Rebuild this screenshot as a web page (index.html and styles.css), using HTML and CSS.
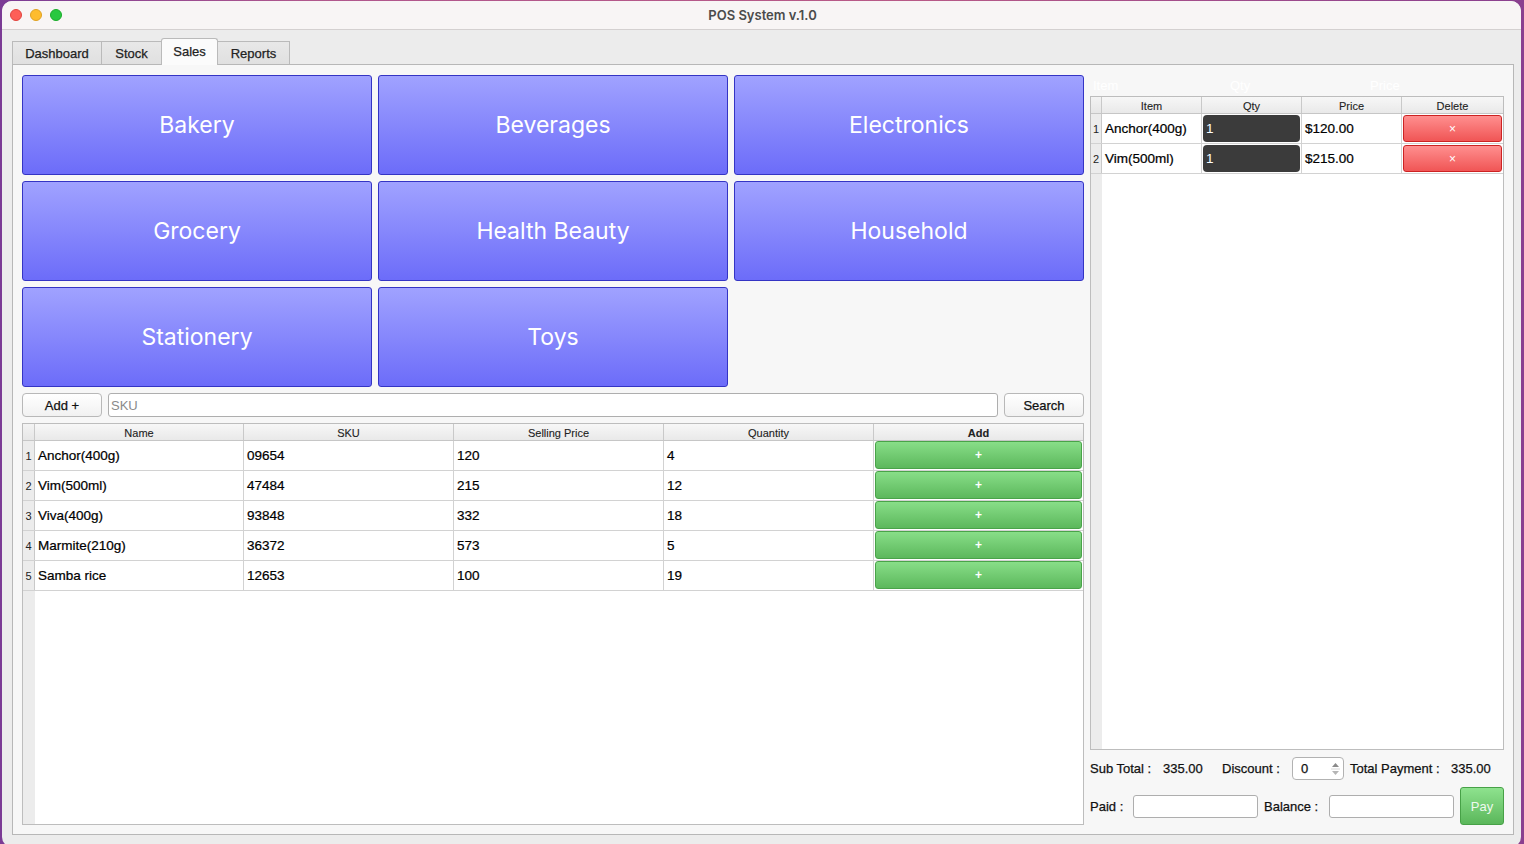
FILE: index.html
```html
<!DOCTYPE html>
<html>
<head>
<meta charset="utf-8">
<title>POS System v.1.0</title>
<link rel="stylesheet" href="styles.css">
</head>
<body>
<div class="window">
  <div class="titlebar">
    <div class="lights">
      <span class="light red"></span>
      <span class="light yellow"></span>
      <span class="light green"></span>
    </div>
    <div class="title">POS System v.1.0</div>
    <div></div>
  </div>
  <div class="main">
    <div class="tabs">
      <div class="tab w-dash">Dashboard</div>
      <div class="tab w-stock">Stock</div>
      <div class="tab active w-sales">Sales</div>
      <div class="tab w-reports">Reports</div>
    </div>
    <div class="pane">
      <div class="left">
        <div class="cats">
          <div class="cat">Bakery</div>
          <div class="cat">Beverages</div>
          <div class="cat">Electronics</div>
          <div class="cat">Grocery</div>
          <div class="cat">Health Beauty</div>
          <div class="cat">Household</div>
          <div class="cat">Stationery</div>
          <div class="cat">Toys</div>
        </div>
        <div class="toolbar">
          <div class="btn w-add">Add +</div>
          <div class="input sku"><span class="placeholder">SKU</span></div>
          <div class="btn w-search">Search</div>
        </div>
        <div class="table">
          <div class="row head prod">
            <div class="vh"></div>
            <div class="hc">Name</div>
            <div class="hc">SKU</div>
            <div class="hc">Selling Price</div>
            <div class="hc">Quantity</div>
            <div class="hc bold">Add</div>
          </div>
          <div class="row prod">
            <div class="vh">1</div><div class="c">Anchor(400g)</div><div class="c">09654</div><div class="c">120</div><div class="c">4</div><div class="c btncell"><div class="addbtn">+</div></div>
          </div>
          <div class="row prod">
            <div class="vh">2</div><div class="c">Vim(500ml)</div><div class="c">47484</div><div class="c">215</div><div class="c">12</div><div class="c btncell"><div class="addbtn">+</div></div>
          </div>
          <div class="row prod">
            <div class="vh">3</div><div class="c">Viva(400g)</div><div class="c">93848</div><div class="c">332</div><div class="c">18</div><div class="c btncell"><div class="addbtn">+</div></div>
          </div>
          <div class="row prod">
            <div class="vh">4</div><div class="c">Marmite(210g)</div><div class="c">36372</div><div class="c">573</div><div class="c">5</div><div class="c btncell"><div class="addbtn">+</div></div>
          </div>
          <div class="row prod">
            <div class="vh">5</div><div class="c">Samba rice</div><div class="c">12653</div><div class="c">100</div><div class="c">19</div><div class="c btncell"><div class="addbtn">+</div></div>
          </div>
          <div class="filler prodfill"></div>
        </div>
      </div>
      <div class="right">
        <div class="ghost">
          <span class="g1">Item</span><span class="g2">Qty</span><span class="g3">Price</span>
        </div>
        <div class="table cart">
          <div class="row head cartrow">
            <div class="vh"></div>
            <div class="hc">Item</div>
            <div class="hc">Qty</div>
            <div class="hc">Price</div>
            <div class="hc">Delete</div>
          </div>
          <div class="row cartrow">
            <div class="vh">1</div><div class="c">Anchor(400g)</div><div class="c btncell"><div class="qty">1</div></div><div class="c">$120.00</div><div class="c btncell"><div class="delbtn">×</div></div>
          </div>
          <div class="row cartrow">
            <div class="vh">2</div><div class="c">Vim(500ml)</div><div class="c btncell"><div class="qty">1</div></div><div class="c">$215.00</div><div class="c btncell"><div class="delbtn">×</div></div>
          </div>
          <div class="filler cartfill"></div>
        </div>
        <div class="totals">
          <span class="l-sub">Sub Total :</span>
          <span class="v-sub">335.00</span>
          <span class="l-disc">Discount :</span>
          <div class="spin"><span>0</span>
            <svg class="arrows" width="9" height="16" viewBox="0 0 9 16"><path d="M1 6 L4.5 2 L8 6 Z" fill="#8a8a8a"/><path d="M1 10 L4.5 14 L8 10 Z" fill="#b5b5b5"/><line x1="0" y1="8" x2="9" y2="8" stroke="#d6d6d6" stroke-width="1"/></svg>
          </div>
          <span class="l-total">Total Payment :</span>
          <span class="v-total">335.00</span>
        </div>
        <div class="payrow">
          <span class="l-paid">Paid :</span>
          <div class="input pinput"></div>
          <span class="l-bal">Balance :</span>
          <div class="input pinput"></div>
          <div class="paybtn">Pay</div>
        </div>
      </div>
    </div>
  </div>
</div>
</body>
</html>
```
FILE: styles.css
```css
html, body {
  margin: 0;
  padding: 0;
}
body {
  width: 1524px;
  height: 844px;
  overflow: hidden;
  background: linear-gradient(90deg, #7b3b95 0%, #b0578d 20%, #b85a87 60%, #8a3f8f 100%);
  font-family: "Liberation Sans", Arial, sans-serif;
  color: #111;
}
.window {
  margin: 1px 0 0 2px;
  width: 1519px;
  height: 846px;
  border-radius: 10px;
  overflow: hidden;
  background: #ececec;
  display: flex;
  flex-direction: column;
  -webkit-text-stroke: 0.25px currentColor;
}
.titlebar {
  height: 28px;
  flex: none;
  background: #f8f5f5;
  border-bottom: 1px solid #d4d0d0;
  display: grid;
  grid-template-columns: 1fr auto 1fr;
  align-items: center;
}
.lights {
  display: flex;
  gap: 8px;
  padding-left: 8px;
}
.light {
  width: 12px;
  height: 12px;
  border-radius: 50%;
  box-sizing: border-box;
}
.light.red { background: #fe5f57; border: 0.5px solid #e0443e; }
.light.yellow { background: #febc2e; border: 0.5px solid #dea123; }
.light.green { background: #28c840; border: 0.5px solid #1aab29; }
.title {
  font-family: Inter, "Liberation Sans", sans-serif;
  font-weight: 600;
  font-size: 13px;
  color: #4b4b4b;
  padding-left: 2px;
  padding-bottom: 1px;
  -webkit-text-stroke: 0;
}
.main {
  padding: 8px 0 0 10px;
  display: flex;
  flex-direction: column;
}
.tabs {
  height: 26px;
  display: flex;
  align-items: flex-end;
}
.tab {
  box-sizing: border-box;
  height: 23px;
  border: 1px solid #bababa;
  border-bottom: none;
  margin-right: -1px;
  background: linear-gradient(#e8e8e8, #e0e0e0);
  font-size: 13px;
  color: #222;
  display: flex;
  align-items: center;
  justify-content: center;
  padding-top: 1px;
}
.tab.active {
  height: 27px;
  margin-bottom: -1px;
  background: #fbfbfb;
  border-radius: 3px 3px 0 0;
  position: relative;
  z-index: 1;
  padding-bottom: 2px;
}
.w-dash { width: 90px; }
.w-stock { width: 61px; }
.w-sales { width: 57px; }
.w-reports { width: 73px; }
.pane {
  box-sizing: border-box;
  width: 1502px;
  height: 771px;
  border: 1px solid #b7b7b7;
  background: #f7f7f7;
  padding: 10px 9px 9px 9px;
  display: flex;
  gap: 6px;
}
.left {
  width: 1062px;
  display: flex;
  flex-direction: column;
  gap: 6px;
}
.cats {
  display: grid;
  grid-template-columns: repeat(3, 350px);
  grid-auto-rows: 100px;
  gap: 6px;
}
.cat {
  box-sizing: border-box;
  border: 1px solid #3434c4;
  border-radius: 3px;
  background: linear-gradient(#a0a2ff, #6c6cf9);
  color: #fff;
  font-family: Inter, "Liberation Sans", sans-serif;
  font-size: 23px;
  display: flex;
  align-items: center;
  justify-content: center;
  -webkit-text-stroke: 0;
}
.toolbar {
  height: 24px;
  display: flex;
  gap: 6px;
}
.btn {
  box-sizing: border-box;
  height: 24px;
  border: 1px solid #b8b8b8;
  border-radius: 4px;
  background: linear-gradient(#ffffff, #f1f1f1);
  font-size: 13px;
  color: #111;
  display: flex;
  align-items: center;
  justify-content: center;
}
.w-add { width: 80px; }
.w-search { width: 80px; }
.input {
  box-sizing: border-box;
  border: 1px solid #aeaeae;
  border-radius: 3px;
  background: #fff;
}
.sku {
  flex: 1;
  display: flex;
  align-items: center;
  padding-left: 2px;
}
.placeholder {
  color: #8a8a8a;
  font-size: 13px;
  -webkit-text-stroke: 0;
}
.table {
  flex: 1;
  box-sizing: border-box;
  border: 1px solid #bdbdbd;
  background: #fff;
  display: flex;
  flex-direction: column;
}
.row {
  display: grid;
  box-sizing: border-box;
  height: 30px;
  border-bottom: 1px solid #d2d2d2;
}
.row.head {
  height: 17px;
  border-bottom: 1px solid #c6c6c6;
  background: linear-gradient(#f7f7f7, #e9e9e9);
}
.prod { grid-template-columns: 12px 209px 210px 210px 210px 209px; }
.cartrow { grid-template-columns: 11px 100px 100px 100px 101px; }
.vh {
  background: #ececec;
  border-right: 1px solid #c9c9c9;
  font-size: 11px;
  color: #222;
  display: flex;
  align-items: center;
  justify-content: center;
  -webkit-text-stroke: 0;
}
.row.head .vh { background: linear-gradient(#f3f3f3, #e6e6e6); }
.hc {
  border-right: 1px solid #c9c9c9;
  font-size: 11px;
  color: #222;
  display: flex;
  align-items: center;
  justify-content: center;
  padding-top: 1px;
  -webkit-text-stroke: 0.1px currentColor;
}
.hc:last-child { border-right: none; }
.hc.bold { font-weight: bold; }
.c {
  border-right: 1px solid #d2d2d2;
  font-size: 13.5px;
  color: #000;
  display: flex;
  align-items: center;
  padding-left: 3px;
  overflow: hidden;
  white-space: nowrap;
  -webkit-text-stroke: 0.22px currentColor;
}
.c:last-child { border-right: none; }
.btncell {
  padding: 0 1px 0 1px;
  align-items: stretch;
}
.addbtn {
  flex: 1;
  box-sizing: border-box;
  border: 1px solid #49a349;
  border-radius: 3px;
  background: linear-gradient(#88de88, #5cb85c);
  color: #fff;
  font-weight: bold;
  font-size: 12px;
  display: flex;
  align-items: center;
  justify-content: center;
  margin: 0 0 1px 0;
  -webkit-text-stroke: 0;
}
.filler {
  flex: 1;
}
.prodfill {
  background: linear-gradient(90deg, #ececec 0, #ececec 12px, #fff 12px);
}
.right {
  width: 414px;
  display: flex;
  flex-direction: column;
}
.ghost {
  height: 21px;
  flex: none;
  color: #ffffff;
  font-size: 13px;
  display: flex;
  align-items: center;
  -webkit-text-stroke: 0;
}
.g1 { margin-left: 3px; width: 137px; }
.g2 { width: 140px; }
.cart {
  flex: none;
  height: 654px;
}
.cartfill {
  background: linear-gradient(90deg, #ececec 0, #ececec 11px, #fff 11px);
}
.qty {
  flex: 1;
  background: #3b3b3b;
  border-radius: 4px;
  color: #fff;
  font-size: 13.5px;
  display: flex;
  align-items: center;
  padding-left: 3px;
  margin: 1px 0 1px 0;
  -webkit-text-stroke: 0;
}
.delbtn {
  flex: 1;
  box-sizing: border-box;
  border: 1px solid #cc2222;
  border-radius: 3px;
  background: linear-gradient(#ff8f8f, #f05555);
  color: #fff;
  font-size: 12px;
  display: flex;
  align-items: center;
  justify-content: center;
  margin: 1px 0 1px 0;
  -webkit-text-stroke: 0;
}
.totals {
  margin-top: 7px;
  height: 23px;
  display: flex;
  align-items: center;
  font-size: 13px;
  color: #111;
}
.l-sub { width: 73px; }
.v-sub { width: 59px; }
.l-disc { width: 70px; }
.spin {
  box-sizing: border-box;
  width: 52px;
  height: 23px;
  border: 1px solid #b2b2b2;
  border-radius: 4px;
  background: #fff;
  display: flex;
  align-items: center;
  justify-content: space-between;
  padding: 0 3px 0 8px;
  margin-right: 6px;
}
.l-total { width: 101px; }
.payrow {
  margin-top: 7px;
  height: 38px;
  display: flex;
  align-items: center;
  font-size: 13px;
  color: #111;
}
.l-paid { width: 43px; }
.l-bal { width: 65px; margin-left: 6px; }
.pinput {
  width: 125px;
  height: 23px;
}
.paybtn {
  box-sizing: border-box;
  margin-left: 6px;
  width: 44px;
  height: 38px;
  border: 1px solid #47a147;
  border-radius: 3px;
  background: linear-gradient(#8ee28e, #5bb75b);
  color: #eef9ee;
  font-size: 13px;
  display: flex;
  align-items: center;
  justify-content: center;
  -webkit-text-stroke: 0;
}
```
